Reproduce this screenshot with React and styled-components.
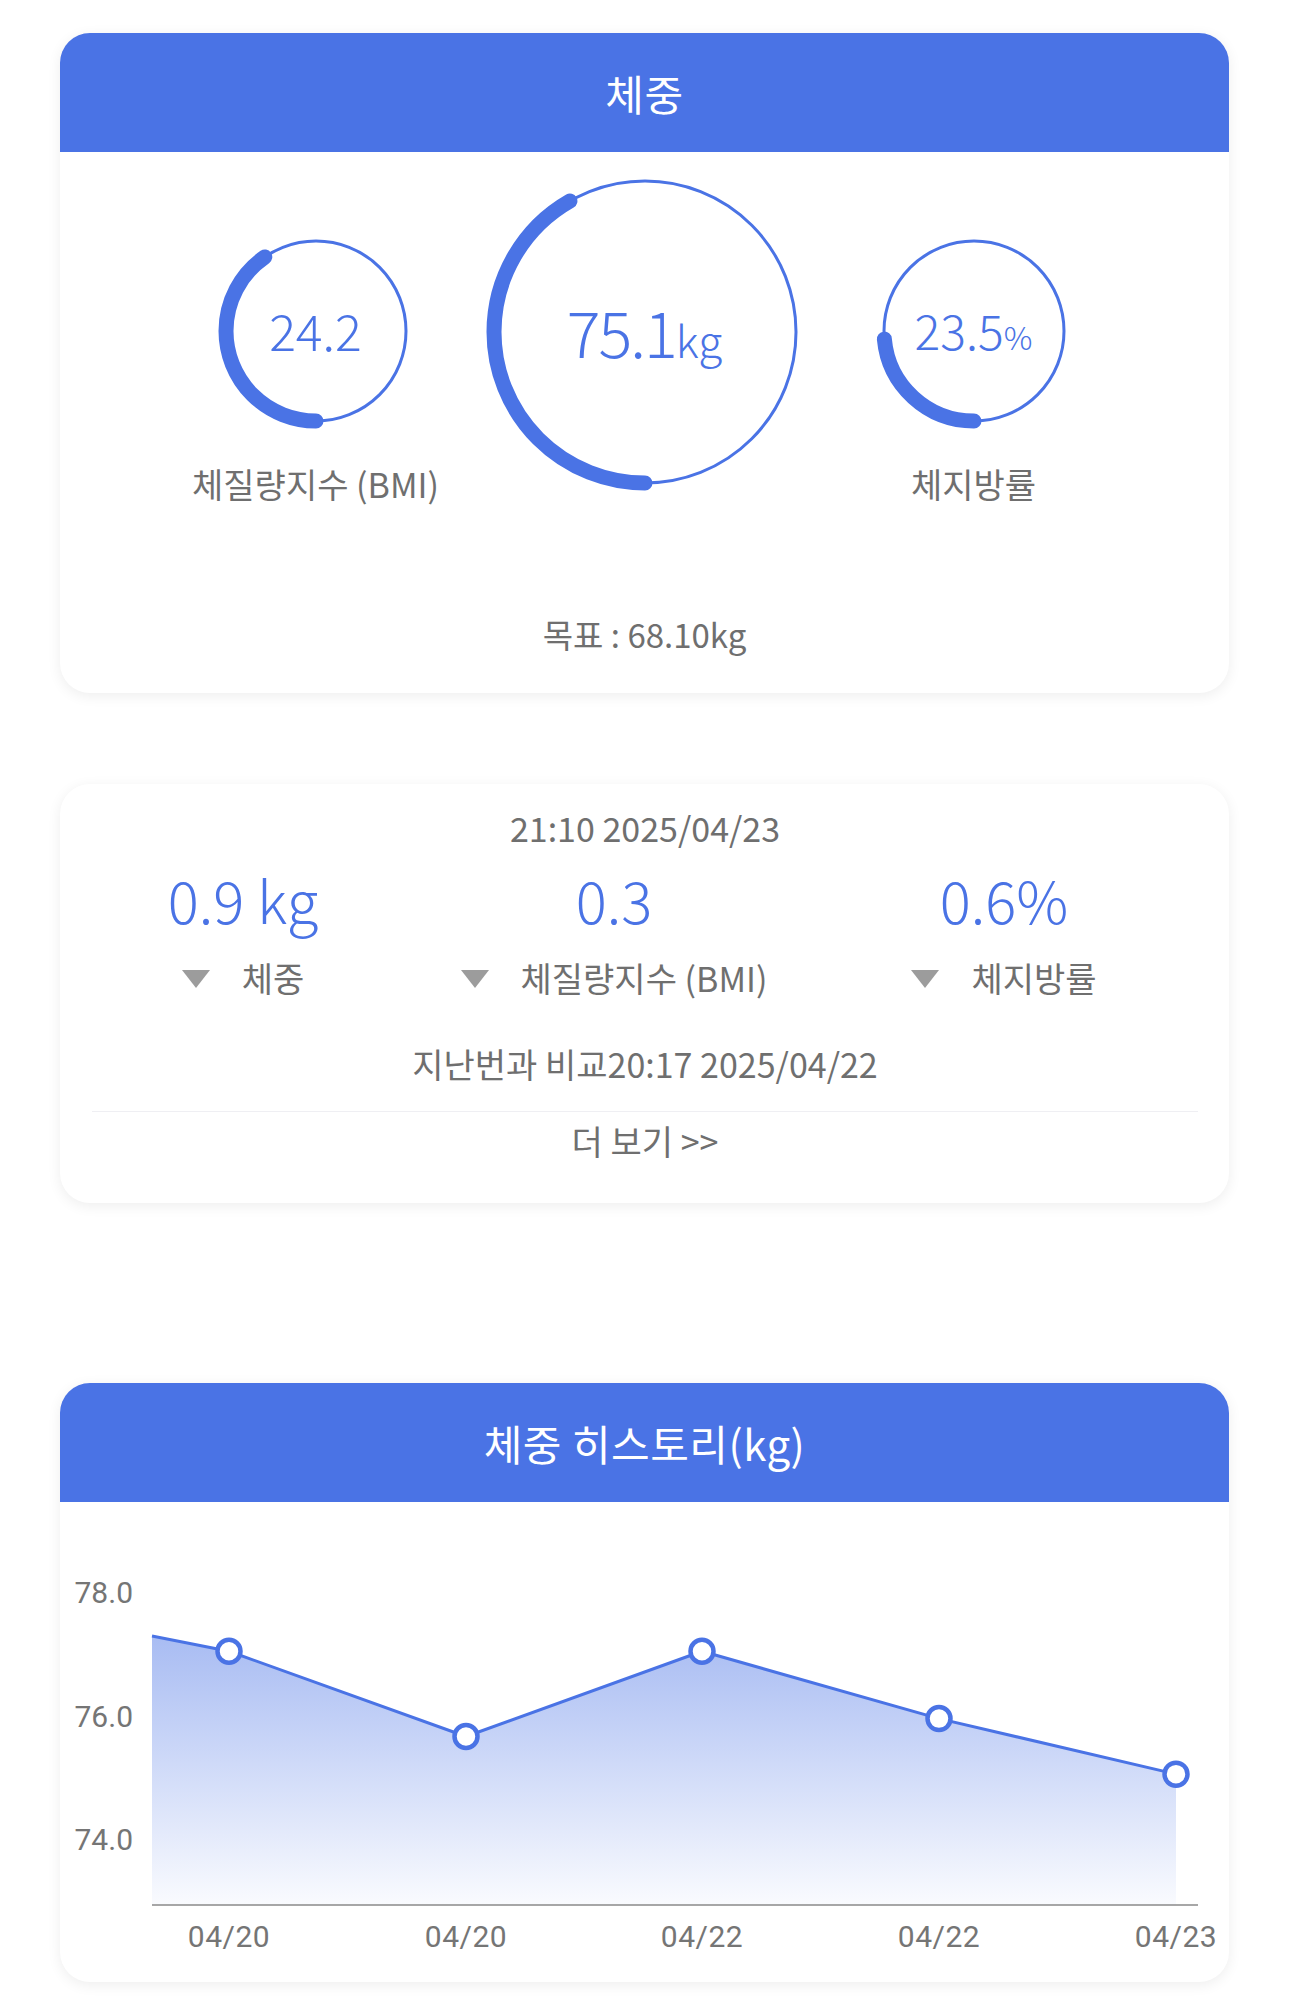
import React from "react";
import styled, { createGlobalStyle } from "styled-components";

const BLUE = "#4a73e5";
const GRAY = "#6f6f6f";

const GlobalStyle = createGlobalStyle`
  html, body { margin: 0; padding: 0; background: #ffffff; }
  body { font-family: "Noto Sans CJK KR", "Noto Sans", sans-serif; }
`;

const Page = styled.div`
  width: 1290px;
  box-sizing: border-box;
  padding: 33px 61px 17px 60px;
  display: flex;
  flex-direction: column;
`;

const Card = styled.section`
  background: #fff;
  border-radius: 30px;
  box-shadow: 0 3px 14px rgba(0, 0, 0, 0.07);
  overflow: hidden;
  margin-top: ${(p) => p.$gap || 0}px;
  display: flex;
  flex-direction: column;
`;

const Header = styled.div`
  height: 119px;
  background: ${BLUE};
  color: #fff;
  font-size: 42px;
  display: flex;
  align-items: center;
  justify-content: center;
  letter-spacing: 0.5px;
`;

const GaugeBody = styled.div`
  padding: 20px 0 39px;
  display: flex;
  flex-direction: column;
  align-items: center;
`;

const GaugeRow = styled.div`
  display: flex;
  justify-content: center;
  align-items: flex-start;
  gap: 69px;
`;

const GaugeItem = styled.div`
  width: ${(p) => p.$size}px;
  display: flex;
  flex-direction: column;
  align-items: center;
  margin-top: ${(p) => p.$offset || 0}px;
`;

const GaugeBox = styled.div`
  display: grid;
  width: ${(p) => p.$size}px;
  height: ${(p) => p.$size}px;
  place-items: center;
  & > * { grid-area: 1 / 1; }
`;

const GaugeValue = styled.div`
  color: ${BLUE};
  font-size: ${(p) => p.$fs}px;
  line-height: 1;
  white-space: nowrap;
  letter-spacing: ${(p) => p.$ls || 0}px;
  font-weight: 300;
  padding-bottom: 4px;
`;

const Unit = styled.span`
  font-size: ${(p) => p.$fs}px;
  letter-spacing: 0;
`;

const GaugeLabel = styled.div`
  margin-top: 33px;
  font-size: 34px;
  line-height: 40px;
  color: ${GRAY};
  white-space: nowrap;
`;

const Goal = styled.div`
  margin-top: 110px;
  font-size: 33px;
  line-height: 40px;
  color: ${GRAY};
`;

const CompareBody = styled.div`
  padding: 23px 31px 41px 32px;
  display: flex;
  flex-direction: column;
  align-items: stretch;
`;

const CenterText = styled.div`
  text-align: center;
  font-size: 34px;
  line-height: 42px;
  color: ${GRAY};
  margin-top: ${(p) => p.$mt || 0}px;
`;

const StatGrid = styled.div`
  margin: 15px -31px 0 -32px;
  display: grid;
  grid-template-columns: 366px 376px 404px;
`;

const Stat = styled.div`
  display: flex;
  flex-direction: column;
  align-items: center;
`;

const StatValue = styled.div`
  color: ${BLUE};
  font-size: 58px;
  line-height: 70px;
  font-weight: 300;
  white-space: nowrap;
`;

const StatLabel = styled.div`
  margin-top: 23px;
  display: flex;
  align-items: center;
  gap: 32px;
  font-size: 34px;
  line-height: 42px;
  color: ${GRAY};
  white-space: nowrap;
`;

const Down = styled.span`
  width: 0;
  height: 0;
  border-left: 14px solid transparent;
  border-right: 14px solid transparent;
  border-top: 18px solid #9c9c9c;
  margin-top: 2px;
`;

const Divider = styled.hr`
  border: none;
  height: 1px;
  background: #efeff3;
  margin: 26px 0 0;
`;

const ChartBody = styled.div`
  height: 480px;
`;

function Gauge({ size, r, frac, children }) {
  const c = size / 2;
  const C = 2 * Math.PI * r;
  return (
    <GaugeBox $size={size}>
      <svg width={size} height={size} viewBox={`0 0 ${size} ${size}`}>
        <circle cx={c} cy={c} r={r} fill="none" stroke={BLUE} strokeWidth="3" />
        <circle
          cx={c}
          cy={c}
          r={r}
          fill="none"
          stroke={BLUE}
          strokeWidth="15"
          strokeLinecap="round"
          strokeDasharray={`${frac * C} ${C}`}
          transform={`rotate(90 ${c} ${c})`}
        />
      </svg>
      {children}
    </GaugeBox>
  );
}

const points = [
  { x: 169, v: 77.04, label: "04/20" },
  { x: 406, v: 75.66, label: "04/20" },
  { x: 642, v: 77.04, label: "04/22" },
  { x: 879, v: 75.95, label: "04/22" },
  { x: 1116, v: 75.05, label: "04/23" },
];

const yOf = (v) => 90 + (78 - v) * 61.75;

function Chart() {
  const start = { x: 92, y: 134 };
  const pts = points.map((p) => ({ ...p, y: yOf(p.v) }));
  const line = [start, ...pts].map((p) => `${p.x},${p.y}`).join(" ");
  const last = pts[pts.length - 1];
  const area = `M${start.x},403 L${line.split(" ").join(" L")} L${last.x},403 Z`;
  return (
    <svg width="1169" height="480" viewBox="0 0 1169 480">
      <defs>
        <linearGradient id="areaFill" x1="0" y1="134" x2="0" y2="403" gradientUnits="userSpaceOnUse">
          <stop offset="0" stopColor={BLUE} stopOpacity="0.48" />
          <stop offset="1" stopColor={BLUE} stopOpacity="0.03" />
        </linearGradient>
      </defs>
      {[
        ["78.0", 90],
        ["76.0", 214],
        ["74.0", 337],
      ].map(([t, y]) => (
        <text
          key={t}
          x="73"
          y={y}
          textAnchor="end"
          dominantBaseline="central"
          fontFamily="Roboto, sans-serif"
          fontSize="30"
          fill="#757575"
        >
          {t}
        </text>
      ))}
      <path d={area} fill="url(#areaFill)" />
      <polyline points={line} fill="none" stroke={BLUE} strokeWidth="3" strokeLinejoin="round" />
      <line x1="92" y1="403" x2="1138" y2="403" stroke="#8a8a8a" strokeWidth="1.5" />
      {pts.map((p, i) => (
        <circle key={i} cx={p.x} cy={p.y} r="11.5" fill="#fff" stroke={BLUE} strokeWidth="4.5" />
      ))}
      {pts.map((p, i) => (
        <text
          key={"l" + i}
          x={p.x}
          y="434"
          textAnchor="middle"
          dominantBaseline="central"
          fontFamily="Roboto, sans-serif"
          fontSize="30"
          fill="#757575"
          letterSpacing="0.5"
        >
          {p.label}
        </text>
      ))}
    </svg>
  );
}

export default function App() {
  return (
    <>
      <GlobalStyle />
      <Page>
        <Card>
          <Header>체중</Header>
          <GaugeBody>
            <GaugeRow>
              <GaugeItem $size={200} $offset={59}>
                <Gauge size={200} r={90} frac={0.403}>
                  <GaugeValue $fs={50}>24.2</GaugeValue>
                </Gauge>
                <GaugeLabel>체질량지수 (BMI)</GaugeLabel>
              </GaugeItem>
              <GaugeItem $size={320}>
                <Gauge size={320} r={151} frac={0.417}>
                  <GaugeValue $fs={63} $ls={-2}>
                    75.1<Unit $fs={44}>kg</Unit>
                  </GaugeValue>
                </Gauge>
              </GaugeItem>
              <GaugeItem $size={200} $offset={59}>
                <Gauge size={200} r={90} frac={0.235}>
                  <GaugeValue $fs={48}>
                    23.5<Unit $fs={32}>%</Unit>
                  </GaugeValue>
                </Gauge>
                <GaugeLabel>체지방률</GaugeLabel>
              </GaugeItem>
            </GaugeRow>
            <Goal>목표 : 68.10kg</Goal>
          </GaugeBody>
        </Card>

        <Card $gap={91}>
          <CompareBody>
            <CenterText>21:10 2025/04/23</CenterText>
            <StatGrid>
              <Stat>
                <StatValue>0.9 kg</StatValue>
                <StatLabel>
                  <Down />
                  체중
                </StatLabel>
              </Stat>
              <Stat>
                <StatValue>0.3</StatValue>
                <StatLabel>
                  <Down />
                  체질량지수 (BMI)
                </StatLabel>
              </Stat>
              <Stat>
                <StatValue>0.6%</StatValue>
                <StatLabel>
                  <Down />
                  체지방률
                </StatLabel>
              </Stat>
            </StatGrid>
            <CenterText $mt={44}>지난번과 비교20:17 2025/04/22</CenterText>
            <Divider />
            <CenterText $mt={8}>더 보기 &gt;&gt;</CenterText>
          </CompareBody>
        </Card>

        <Card $gap={180}>
          <Header>체중 히스토리(kg)</Header>
          <ChartBody>
            <Chart />
          </ChartBody>
        </Card>
      </Page>
    </>
  );
}
